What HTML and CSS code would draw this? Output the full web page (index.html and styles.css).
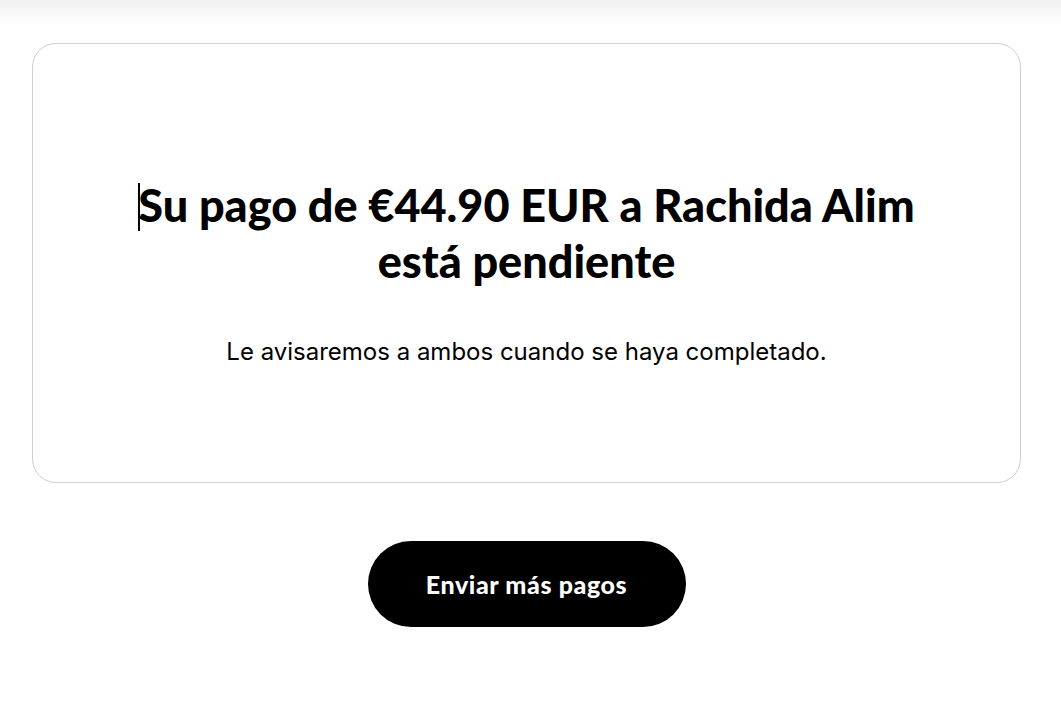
FILE: index.html
```html
<!DOCTYPE html>
<html lang="es">
<head>
<meta charset="utf-8">
<title>Pago pendiente</title>
<link rel="stylesheet" href="styles.css">
</head>
<body>
<div class="topshade"></div>
<main class="page">
  <section class="card">
    <h1 class="title"><span class="caret"></span>Su pago de €44.90 EUR a Rachida Alim<br>está pendiente</h1>
    <p class="note">Le avisaremos a ambos cuando se haya completado.</p>
  </section>
  <div class="actions">
    <button class="btn">Enviar más pagos</button>
  </div>
</main>
</body>
</html>
```
FILE: styles.css
```css
html, body {
  margin: 0;
  padding: 0;
  background: #ffffff;
}
body {
  font-family: Inter, "Liberation Sans", sans-serif;
  color: #000;
}
.topshade {
  height: 26px;
  background: linear-gradient(to bottom, #f1f1f1, #ffffff);
}
.page {
  padding: 17px 40px 0 32px;
}
.card {
  border: 1px solid #cfcfcf;
  border-radius: 24px;
  padding: 133px 20px 0;
  box-sizing: border-box;
  height: 440px;
  text-align: center;
}
.title {
  margin: 0;
  font-family: Lato, sans-serif;
  font-weight: 900;
  font-size: 45px;
  line-height: 56px;
  letter-spacing: 0;
}
.caret {
  display: inline-block;
  width: 1.5px;
  height: 48px;
  background: #000;
  vertical-align: -9px;
  margin-right: -1.5px;
}
.note {
  margin: 48px 0 0;
  font-size: 24px;
  line-height: 30px;
}
.actions {
  display: flex;
  justify-content: center;
  padding-top: 58px;
}
.btn {
  width: 318px;
  height: 86px;
  border: none;
  border-radius: 43px;
  background: #000;
  color: #fff;
  font-family: Lato, sans-serif;
  font-weight: 900;
  font-size: 25px;
  letter-spacing: 0.6px;
  cursor: pointer;
}
```
